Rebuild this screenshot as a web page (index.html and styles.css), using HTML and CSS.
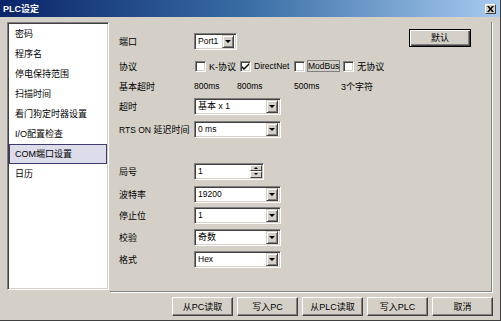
FILE: index.html
```html
<!DOCTYPE html>
<html lang="zh-CN">
<head>
<meta charset="utf-8">
<title>PLC设定</title>
<link rel="stylesheet" href="styles.css">
</head>
<body>
<div class="window">
  <div class="titlebar">
    <span class="title">PLC设定</span>
    <span class="close"><svg width="7" height="6" viewBox="0 0 7 6"><path d="M0 0h2l1.5 2L5 0h2L4.5 3 7 6H5L3.5 4 2 6H0l2.5-3z" fill="#000"/></svg></span>
  </div>
  <div class="main">
    <ul class="nav">
      <li>密码</li>
      <li>程序名</li>
      <li>停电保持范围</li>
      <li>扫描时间</li>
      <li>看门狗定时器设置</li>
      <li>I/O配置检查</li>
      <li class="selected">COM端口设置</li>
      <li>日历</li>
    </ul>
    <div class="panel">
      <div class="row r1">
        <span class="label">端口</span>
        <div class="combo short"><span class="val en">Port1</span><span class="drop"></span></div>
        <button class="btn default">默认</button>
      </div>
      <div class="row r2">
        <span class="label">协议</span>
        <span class="cbgroup g1"><span class="cb"></span><span>K-协议</span></span>
        <span class="cbgroup g2"><span class="cb checked"><svg width="7" height="7" viewBox="0 0 7 7"><path d="M0 3l2 2 5-5v2l-5 5-2-2z" fill="#000"/></svg></span><span class="en">DirectNet</span></span>
        <span class="cbgroup g3"><span class="cb"></span><span class="en focus">ModBus</span></span>
        <span class="cbgroup g4"><span class="cb"></span><span>无协议</span></span>
      </div>
      <div class="row r3">
        <span class="label">基本超时</span>
        <span class="en t1">800ms</span>
        <span class="en t2">800ms</span>
        <span class="en t3">500ms</span>
        <span class="t4">3个字符</span>
      </div>
      <div class="row r4">
        <span class="label">超时</span>
        <div class="combo"><span class="val">基本 <span class="en">x 1</span></span><span class="drop"></span></div>
      </div>
      <div class="row r5">
        <span class="label"><span class="en">RTS ON</span> 延迟时间</span>
        <div class="combo"><span class="val en">0 ms</span><span class="drop"></span></div>
      </div>
      <div class="row r6">
        <span class="label">局号</span>
        <div class="spin"><span class="val en">1</span><span class="spinbtns"><span class="sb up"></span><span class="sb down"></span></span></div>
      </div>
      <div class="row r7">
        <span class="label">波特率</span>
        <div class="combo"><span class="val en">19200</span><span class="drop"></span></div>
      </div>
      <div class="row r8">
        <span class="label">停止位</span>
        <div class="combo"><span class="val en">1</span><span class="drop"></span></div>
      </div>
      <div class="row r9">
        <span class="label">校验</span>
        <div class="combo"><span class="val">奇数</span><span class="drop"></span></div>
      </div>
      <div class="row r10">
        <span class="label">格式</span>
        <div class="combo"><span class="val en">Hex</span><span class="drop"></span></div>
      </div>
    </div>
  </div>
  <div class="footer">
    <button class="btn">从PC读取</button>
    <button class="btn">写入PC</button>
    <button class="btn">从PLC读取</button>
    <button class="btn">写入PLC</button>
    <button class="btn">取消</button>
  </div>
</div>
</body>
</html>
```
FILE: styles.css
```css
* { box-sizing: border-box; }
html, body { margin: 0; padding: 0; background: #d4d0c8; }
body {
  font-family: "Liberation Sans", "Noto Sans CJK SC", sans-serif;
  font-size: 9px;
  color: #000;
}
.window {
  width: 501px;
  height: 321px;
  background: #d4d0c8;
  border-right: 1px solid #404040;
  border-bottom: 1px solid #404040;
  display: flex;
  flex-direction: column;
}
.titlebar {
  height: 17px;
  background: linear-gradient(to right, #0a246a 0%, #3a6ea5 50%, #a6caf0 100%);
  display: flex;
  align-items: center;
  padding: 0 4px 0 3px;
}
.title { color: #fff; font-weight: bold; font-size: 9px; line-height: 16px; }
.close {
  margin-left: auto;
  width: 11px;
  height: 10px;
  background: #d4d0c8;
  border: 1px solid;
  border-color: #fff #404040 #404040 #fff;
  display: flex;
  align-items: center;
  justify-content: center;
}
.main {
  display: flex;
  padding: 5px 0 0 7px;
}
.nav {
  list-style: none;
  margin: 0;
  width: 102px;
  height: 268px;
  background: #fff;
  border: 1px solid;
  border-color: #808080 #fff #fff #808080;
  box-shadow: inset 1px 1px #404040, inset -1px -1px #d4d0c8;
  padding: 1px;
}
.nav li {
  height: 20px;
  line-height: 19px;
  padding-left: 5px;
  border: 1px solid transparent;
  white-space: nowrap;
}
.nav li.selected {
  background: #dcdcea;
  border-color: #3c3c6c;
}
.panel {
  flex: 1;
  height: 270px;
  margin-right: 8px;
  margin-left: 1px;
  border-right: 1px solid #808080;
  border-bottom: 1px solid #808080;
  box-shadow: 1px 1px 0 #fff;
  padding: 9px 0 0 9px;
  display: flex;
  flex-direction: column;
}
.row {
  display: flex;
  align-items: center;
  height: 20px;
  flex: none;
}
.r2 { margin-top: 5px; }
.r5 { margin-top: 3px; }
.r6 { margin-top: 22px; }
.r7 { margin-top: 3px; }
.r8 { margin-top: 1px; }
.r9 { margin-top: 2px; }
.r10 { margin-top: 2px; }
.label { width: 75px; flex: none; white-space: nowrap; }
.en { font-size: 8.5px; }
.combo, .spin {
  display: flex;
  align-items: center;
  height: 17px;
  width: 87px;
  background: #fff;
  border: 1px solid;
  border-color: #808080 #fff #fff #808080;
  box-shadow: inset 1px 1px #404040, inset -1px -1px #d4d0c8;
  padding: 2px 2px 2px 3px;
}
.combo.short { width: 43px; }
.spin { width: 70px; padding-right: 1px; }
.val { flex: 1; white-space: nowrap; line-height: 11px; }
.drop {
  width: 12px;
  height: 13px;
  flex: none;
  background: #d4d0c8;
  border: 1px solid;
  border-color: #d4d0c8 #404040 #404040 #d4d0c8;
  box-shadow: inset 1px 1px #fff, inset -1px -1px #808080;
  position: relative;
}
.drop::after {
  content: "";
  position: absolute;
  left: 2px;
  top: 4px;
  border-left: 3px solid transparent;
  border-right: 3px solid transparent;
  border-top: 3px solid #000;
}
.spinbtns { display: flex; flex-direction: column; width: 12px; height: 13px; }
.sb {
  flex: 1;
  background: #d4d0c8;
  border: 1px solid;
  border-color: #fff #404040 #404040 #fff;
  position: relative;
}
.sb::after {
  content: "";
  position: absolute;
  left: 3px;
  top: 1px;
  border-left: 2px solid transparent;
  border-right: 2px solid transparent;
}
.sb.up::after { border-bottom: 2px solid #000; }
.sb.down::after { border-top: 2px solid #000; }
.btn {
  font-family: inherit;
  font-size: 9px;
  color: #000;
  background: #d4d0c8;
  border: 1px solid;
  border-color: #fff #404040 #404040 #fff;
  box-shadow: inset -1px -1px #808080;
  padding: 0;
  height: 19px;
  width: 61px;
  line-height: 16px;
}
.btn.default {
  margin-left: auto;
  margin-right: 20px;
  align-self: flex-start;
  margin-top: -2px;
  width: 62px;
  height: 18px;
  border: 1px solid #000;
  box-shadow: inset 1px 1px #fff, inset -1px -1px #404040, inset -2px -2px #808080;
}
.cbgroup { display: flex; align-items: center; gap: 3px; flex: none; white-space: nowrap; }
.g1 { margin-left: 1px; width: 45px; }
.g2 { width: 54px; }
.g3 { gap: 2px; margin-right: 3px; }
.cb {
  width: 11px;
  height: 11px;
  flex: none;
  background: #fff;
  border: 1px solid;
  border-color: #808080 #fff #fff #808080;
  box-shadow: inset 1px 1px #404040, inset -1px -1px #d4d0c8;
  display: flex;
  align-items: center;
  justify-content: center;
}
.focus { border: 1px solid #808080; padding: 0; line-height: 10px; }
.t1 { width: 43px; }
.t2 { width: 57px; }
.t3 { width: 47px; }
.footer {
  display: flex;
  justify-content: flex-end;
  gap: 4px;
  padding-right: 7px;
  margin-top: 5px;
}
```
